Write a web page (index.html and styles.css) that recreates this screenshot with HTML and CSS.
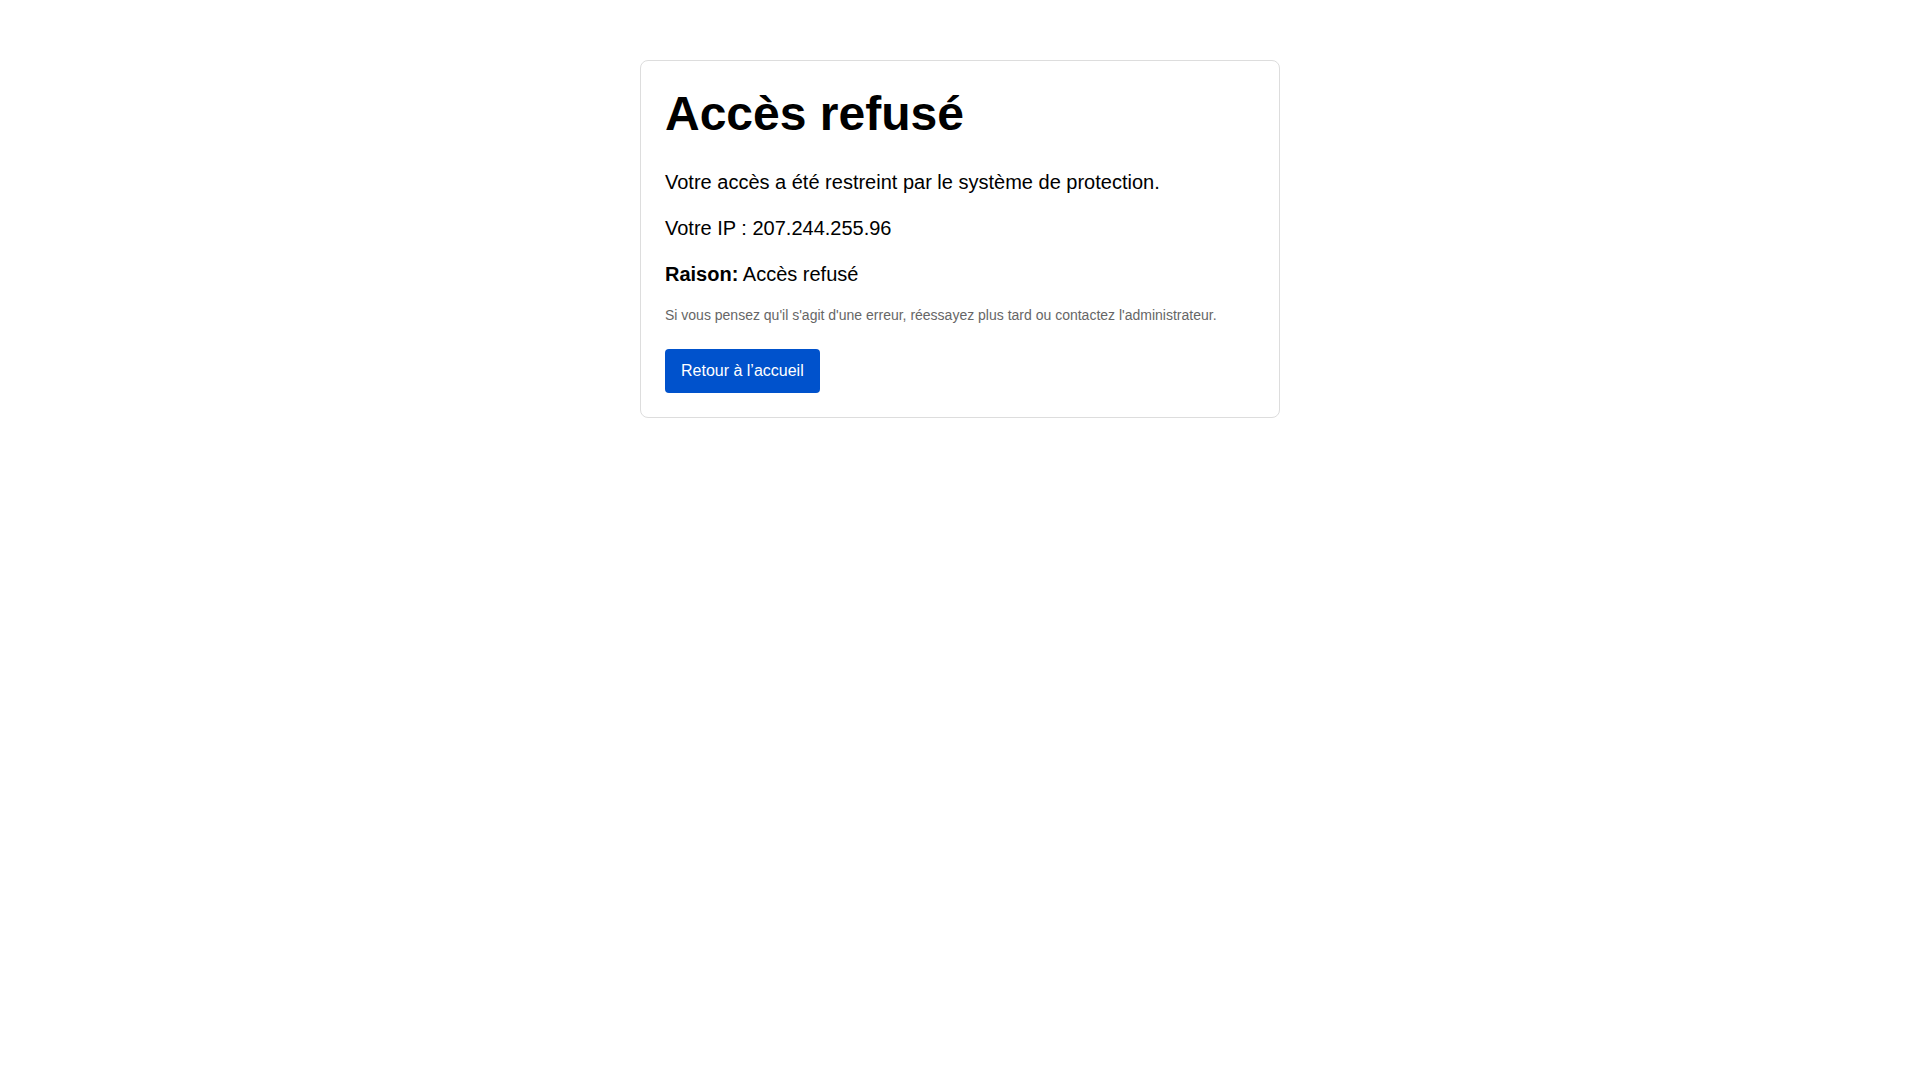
FILE: index.html
```html
<!DOCTYPE html>
<html lang="fr">
<head>
<meta charset="utf-8">
<title>Accès refusé</title>
<link rel="stylesheet" href="styles.css">
</head>
<body>
<main class="card">
  <h1 class="title">Accès refusé</h1>
  <p class="line">Votre accès a été restreint par le système de protection.</p>
  <p class="line">Votre IP : 207.244.255.96</p>
  <p class="line"><strong>Raison:</strong> Accès refusé</p>
  <p class="note">Si vous pensez qu'il s'agit d'une erreur, réessayez plus tard ou contactez l'administrateur.</p>
  <div class="actions"><a class="btn" href="#">Retour à l’accueil</a></div>
</main>
</body>
</html>
```

FILE: styles.css
```css
html, body {
  margin: 0;
  padding: 0;
  background: #ffffff;
}
body {
  font-family: "Liberation Sans", Arial, sans-serif;
  color: #000;
}
.card {
  box-sizing: border-box;
  width: 640px;
  margin: 60px auto;
  padding: 24px;
  border: 1px solid #dddddd;
  border-radius: 8px;
  background: #fff;
}
.title {
  font-size: 48px;
  line-height: 1.2;
  font-weight: 700;
  margin: 0 0 24px;
}
.line {
  font-size: 20px;
  line-height: 30px;
  margin: 16px 0;
}
.note {
  font-size: 14px;
  line-height: 21px;
  color: #666666;
  margin: 16px 0 0;
}
.actions {
  margin-top: 23px;
}
.btn {
  display: inline-block;
  vertical-align: top;
  background: #0052cc;
  color: #ffffff;
  font-size: 16px;
  line-height: 24px;
  padding: 10px 16px;
  border-radius: 4px;
  text-decoration: none;
}
```
